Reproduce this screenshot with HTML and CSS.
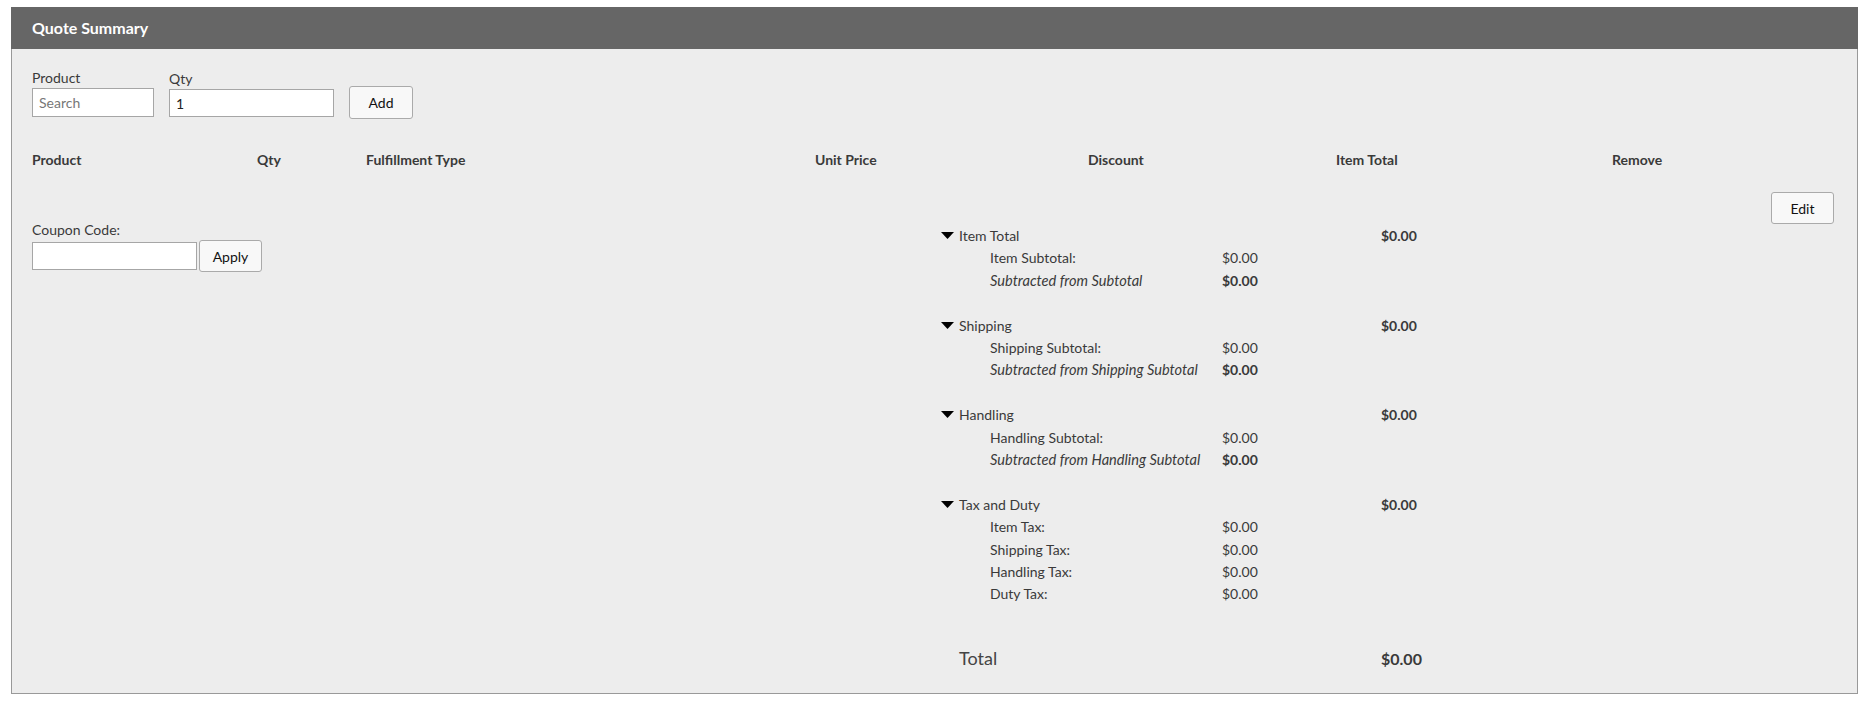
FILE: index.html
```html
<!DOCTYPE html>
<html lang="en">
<head>
    <meta charset="UTF-8">
    <meta name="viewport" content="width=device-width, initial-scale=1.0">
    <title>Quote Summary</title>
    <link rel="stylesheet" href="styles.css">
</head>
<body>
    <div class="page">
        <section class="panel">
            <header class="panel-head">Quote Summary</header>
            <div class="panel-body">
                <div class="add-form">
                    <div class="field">
                        <label for="product">Product</label>
                        <input type="text" id="product" class="inp inp-product" placeholder="Search">
                    </div>
                    <div class="field">
                        <label for="qty">Qty</label>
                        <input type="text" id="qty" class="inp inp-qty" value="1">
                    </div>
                    <button class="btn btn-add">Add</button>
                </div>

                <div class="cols">
                    <span>Product</span>
                    <span>Qty</span>
                    <span>Fulfillment Type</span>
                    <span>Unit Price</span>
                    <span>Discount</span>
                    <span>Item Total</span>
                    <span>Remove</span>
                </div>

                <div class="lower">
                    <div class="coupon">
                        <label for="coupon">Coupon Code:</label>
                        <div class="coupon-row">
                            <input type="text" id="coupon" class="inp inp-coupon">
                            <button class="btn btn-apply">Apply</button>
                        </div>
                    </div>

                    <div class="summary">
                        <div class="group">
                            <div class="row">
                                <span class="caret"><svg width="13" height="7" viewBox="0 0 13 7"><polygon points="0,0 13,0 6.5,7" fill="#000"/></svg></span>
                                <span class="grp-name">Item Total</span>
                                <span class="grp-val">$0.00</span>
                            </div>
                            <div class="row"><span class="sub-label">Item Subtotal:</span><span class="sub-val">$0.00</span></div>
                            <div class="row"><span class="sub-label em">Subtracted from Subtotal</span><span class="sub-val strong">$0.00</span></div>
                        </div>
                        <div class="group">
                            <div class="row">
                                <span class="caret"><svg width="13" height="7" viewBox="0 0 13 7"><polygon points="0,0 13,0 6.5,7" fill="#000"/></svg></span>
                                <span class="grp-name">Shipping</span>
                                <span class="grp-val">$0.00</span>
                            </div>
                            <div class="row"><span class="sub-label">Shipping Subtotal:</span><span class="sub-val">$0.00</span></div>
                            <div class="row"><span class="sub-label em">Subtracted from Shipping Subtotal</span><span class="sub-val strong">$0.00</span></div>
                        </div>
                        <div class="group">
                            <div class="row">
                                <span class="caret"><svg width="13" height="7" viewBox="0 0 13 7"><polygon points="0,0 13,0 6.5,7" fill="#000"/></svg></span>
                                <span class="grp-name">Handling</span>
                                <span class="grp-val">$0.00</span>
                            </div>
                            <div class="row"><span class="sub-label">Handling Subtotal:</span><span class="sub-val">$0.00</span></div>
                            <div class="row"><span class="sub-label em">Subtracted from Handling Subtotal</span><span class="sub-val strong">$0.00</span></div>
                        </div>
                        <div class="group">
                            <div class="row">
                                <span class="caret"><svg width="13" height="7" viewBox="0 0 13 7"><polygon points="0,0 13,0 6.5,7" fill="#000"/></svg></span>
                                <span class="grp-name">Tax and Duty</span>
                                <span class="grp-val">$0.00</span>
                            </div>
                            <div class="row"><span class="sub-label">Item Tax:</span><span class="sub-val">$0.00</span></div>
                            <div class="row"><span class="sub-label">Shipping Tax:</span><span class="sub-val">$0.00</span></div>
                            <div class="row"><span class="sub-label">Handling Tax:</span><span class="sub-val">$0.00</span></div>
                            <div class="row"><span class="sub-label">Duty Tax:</span><span class="sub-val">$0.00</span></div>
                        </div>
                        <div class="total-row">
                            <span class="total-label">Total</span>
                            <span class="total-val">$0.00</span>
                        </div>
                    </div>

                    <div class="edit-wrap">
                        <button class="btn btn-edit">Edit</button>
                    </div>
                </div>
            </div>
        </section>
    </div>
</body>
</html>
```

FILE: styles.css
```css
body {
    margin: 0;
    font-family: Lato, "Noto Sans", sans-serif;
    font-size: 14px;
    color: #3a3a3a;
    background: #fff;
}
.page {
    padding: 7px 0 0 11px;
}
.panel {
    width: 1847px;
}
.panel-head {
    height: 42px;
    line-height: 42px;
    padding-left: 21px;
    background: #666;
    color: #fff;
    font-size: 16px;
    font-weight: 700;
}
.panel-body {
    background: #ededed;
    border: 1px solid #999;
    border-top: none;
    padding: 21px 23px 22px 20px;
}

/* add product */
.add-form {
    display: flex;
    align-items: flex-end;
    gap: 15px;
}
.field label {
    display: block;
    line-height: 16px;
    margin-bottom: 2px;
}
.inp {
    box-sizing: border-box;
    height: 28px;
    border: 1px solid #a6a6a6;
    background: #fff;
    padding: 0 6px;
    font-family: inherit;
    font-size: 14px;
    color: #222;
    margin: 0;
}
.inp::placeholder {
    color: #777;
}
.inp-product {
    width: 122px;
    height: 29px;
}
.inp-qty {
    width: 165px;
}
.inp-coupon {
    width: 165px;
}
.btn {
    box-sizing: border-box;
    height: 33px;
    background: #f8f8f8;
    border: 1px solid #aaa;
    border-radius: 3px;
    font-family: inherit;
    font-size: 14px;
    color: #111;
    cursor: pointer;
    padding: 0;
}
.btn-add {
    width: 64px;
    margin-bottom: -2px;
}

/* column headers */
.cols {
    display: grid;
    grid-template-columns: 225px 109px 449px 273px 248px 276px auto;
    margin-top: 35px;
    line-height: 16px;
    font-weight: 700;
}

/* lower area */
.lower {
    display: flex;
    align-items: flex-start;
    padding-top: 24px;
}
.coupon {
    width: 909px;
    margin-top: 30px;
}
.coupon label {
    display: block;
    line-height: 16px;
    margin-bottom: 2px;
}
.coupon-row {
    display: flex;
    align-items: center;
    gap: 2px;
}
.btn-apply {
    width: 63px;
    height: 32px;
}
.edit-wrap {
    margin-left: auto;
}
.btn-edit {
    width: 63px;
    height: 32px;
}

/* summary */
.summary {
    width: 490px;
    margin-top: 33px;
}
.group {
    margin-bottom: 22.4px;
}
.row {
    display: grid;
    grid-template-columns: 18px 31px 232px 159px auto;
    line-height: 22.4px;
}
.caret {
    display: flex;
    align-items: center;
    padding-bottom: 1px;
}
.grp-name {
    grid-column: 2 / 5;
}
.grp-val {
    font-weight: 700;
}
.sub-label {
    grid-column: 3;
}
.sub-val {
    grid-column: 4;
}
.em {
    font-style: italic;
    font-size: 14.6px;
}
.strong {
    font-weight: 700;
}
.total-row {
    display: grid;
    grid-template-columns: 18px 422px auto;
    align-items: baseline;
    margin-top: 40px;
    line-height: 24px;
}
.total-label {
    grid-column: 2;
    font-size: 18px;
    color: #444;
}
.total-val {
    font-size: 16px;
    font-weight: 700;
}
```
